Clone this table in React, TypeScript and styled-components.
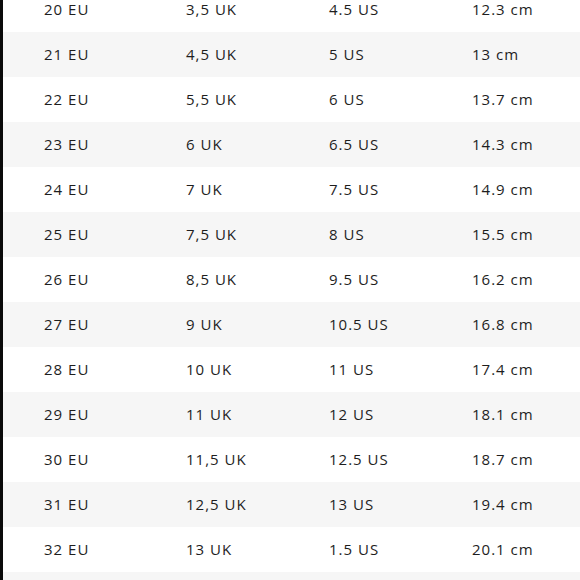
import React from 'react';
import styled, { createGlobalStyle } from 'styled-components';

const rows: string[][] = [
  ['20 EU', '3,5 UK', '4.5 US', '12.3 cm'],
  ['21 EU', '4,5 UK', '5 US', '13 cm'],
  ['22 EU', '5,5 UK', '6 US', '13.7 cm'],
  ['23 EU', '6 UK', '6.5 US', '14.3 cm'],
  ['24 EU', '7 UK', '7.5 US', '14.9 cm'],
  ['25 EU', '7,5 UK', '8 US', '15.5 cm'],
  ['26 EU', '8,5 UK', '9.5 US', '16.2 cm'],
  ['27 EU', '9 UK', '10.5 US', '16.8 cm'],
  ['28 EU', '10 UK', '11 US', '17.4 cm'],
  ['29 EU', '11 UK', '12 US', '18.1 cm'],
  ['30 EU', '11,5 UK', '12.5 US', '18.7 cm'],
  ['31 EU', '12,5 UK', '13 US', '19.4 cm'],
  ['32 EU', '13 UK', '1.5 US', '20.1 cm'],
  [],
];

const GlobalStyle = createGlobalStyle`
  html, body {
    margin: 0;
    padding: 0;
    background: #ffffff;
    overflow: hidden;
  }
  * {
    box-sizing: border-box;
  }
`;

const Page = styled.div`
  width: 580px;
  height: 580px;
  overflow: hidden;
  display: flex;
  background: #ffffff;
`;

const EdgeBar = styled.div`
  width: 3px;
  flex-shrink: 0;
  background: #0a0a0a;
`;

const Table = styled.div`
  flex: 1;
  display: flex;
  flex-direction: column;
  margin-top: -13px;
`;

const Row = styled.div<{ $shaded: boolean }>`
  height: 45px;
  flex-shrink: 0;
  display: grid;
  grid-template-columns: 142px 143px 143px 1fr;
  align-items: center;
  padding-left: 41px;
  padding-bottom: 2px;
  background: ${({ $shaded }) => ($shaded ? '#f6f6f6' : '#ffffff')};
`;

const Cell = styled.span`
  font-family: 'Open Sans', 'Liberation Sans', sans-serif;
  font-size: 15px;
  letter-spacing: 1px;
  color: #1e1e1e;
`;

const App: React.FC = () => {
  return (
    <>
      <GlobalStyle />
      <Page>
        <EdgeBar />
        <Table>
          {rows.map((r, i) => (
            <Row key={i} $shaded={i % 2 === 1}>
              {r.map((c) => (
                <Cell key={c}>{c}</Cell>
              ))}
            </Row>
          ))}
        </Table>
      </Page>
    </>
  );
};

export default App;
